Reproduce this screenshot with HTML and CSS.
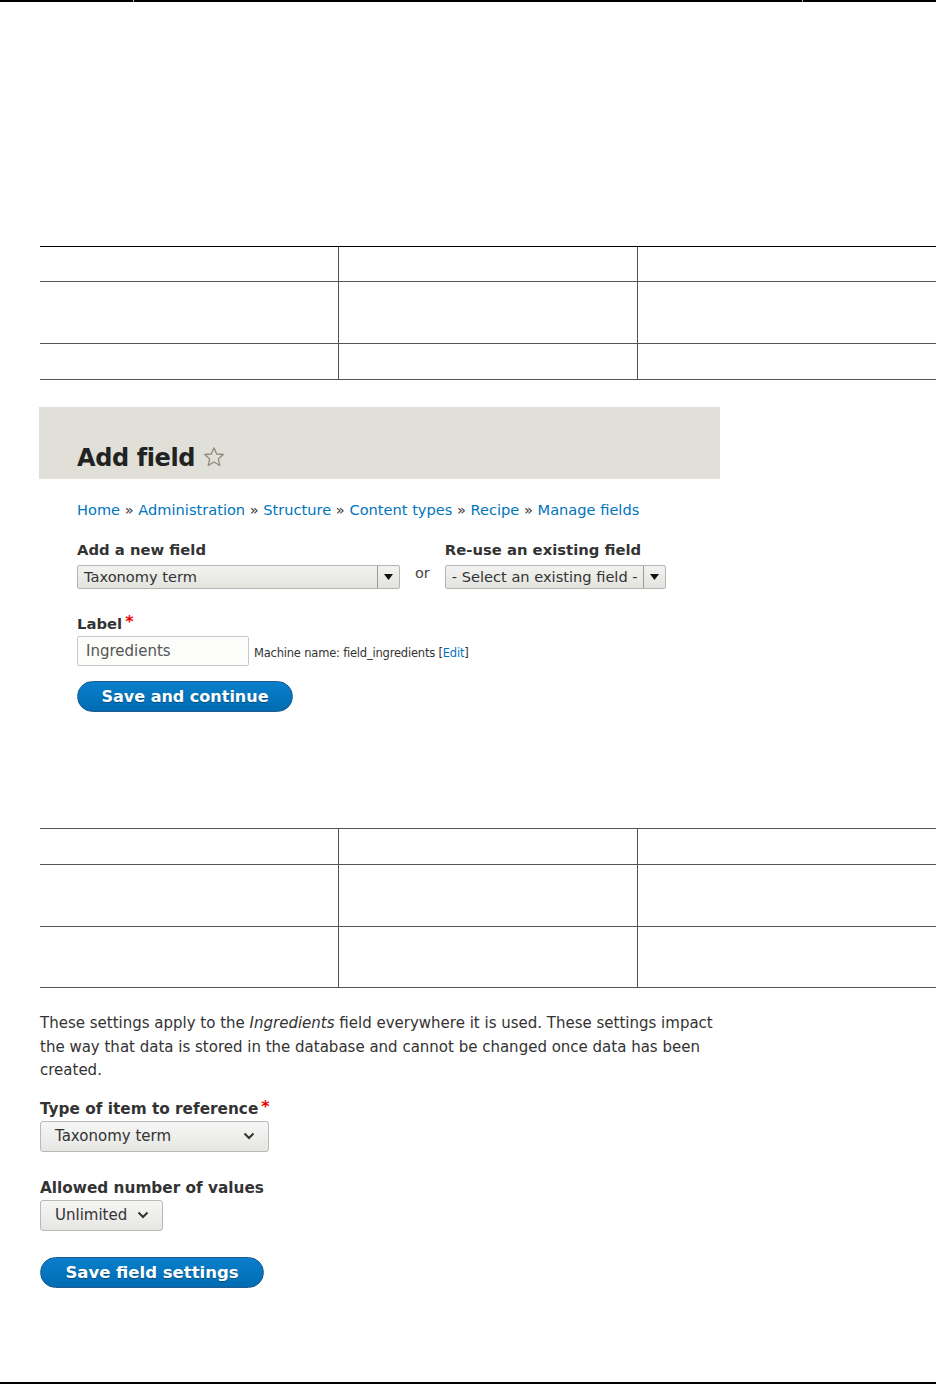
FILE: index.html
```html
<!DOCTYPE html>
<html lang="en">
<head>
    <meta charset="UTF-8">
    <meta name="viewport" content="width=device-width, initial-scale=1.0">
    <title>Add field</title>
    <link rel="stylesheet" href="styles.css">
</head>
<body>
    <div class="top-rule">
        <span></span><span></span><span></span>
    </div>

    <table class="grid grid-first">
        <tr class="row-head"><td></td><td></td><td></td></tr>
        <tr class="row-tall"><td></td><td></td><td></td></tr>
        <tr class="row-short"><td></td><td></td><td></td></tr>
    </table>

    <div class="shot">
        <div class="page-head">
            <h1>Add field<svg class="star" width="22" height="22" viewBox="0 0 22 22">
                    <path d="M11 1.8 L13.7 8 L20.3 8.5 L15.3 12.9 L16.8 19.5 L11 16 L5.2 19.5 L6.7 12.9 L1.7 8.5 L8.3 8 Z" fill="none" stroke="#8d8d84" stroke-width="1.3" stroke-linejoin="round"/>
                </svg></h1>
        </div>

        <div class="shot-body">
            <div class="breadcrumb">
                <a href="#">Home</a> » <a href="#">Administration</a> » <a href="#">Structure</a> » <a href="#">Content types</a> » <a href="#">Recipe</a> » <a href="#">Manage fields</a>
            </div>

            <div class="field-pick">
                <div class="pick-col">
                    <div class="label">Add a new field</div>
                    <div class="old-select wide">
                        <span>Taxonomy term</span>
                        <span class="drop"><svg width="9" height="6" viewBox="0 0 9 6"><path d="M0 0 H9 L4.5 6 Z" fill="#111"/></svg></span>
                    </div>
                </div>
                <div class="or">or</div>
                <div class="pick-col">
                    <div class="label">Re-use an existing field</div>
                    <div class="old-select narrow">
                        <span>- Select an existing field -</span>
                        <span class="drop"><svg width="9" height="6" viewBox="0 0 9 6"><path d="M0 0 H9 L4.5 6 Z" fill="#111"/></svg></span>
                    </div>
                </div>
            </div>

            <div class="label label-gap">Label<span class="req">*</span></div>
            <div class="label-row">
                <div class="text-input">Ingredients</div>
                <div class="machine">Machine name: field_ingredients [<a href="#">Edit</a>]</div>
            </div>

            <button type="button" class="btn btn-continue">Save and continue</button>
        </div>
    </div>

    <table class="grid grid-second">
        <tr class="row-short"><td></td><td></td><td></td></tr>
        <tr class="row-tall"><td></td><td></td><td></td></tr>
        <tr class="row-end"><td></td><td></td><td></td></tr>
    </table>

    <div class="settings">
        <p>These settings apply to the <em>Ingredients</em> field everywhere it is used. These settings impact the way that data is stored in the database and cannot be changed once data has been created.</p>

        <div class="label">Type of item to reference<span class="req">*</span></div>
        <div class="new-select type-select">
            <span>Taxonomy term</span>
            <svg width="12" height="8" viewBox="0 0 12 8"><path d="M1.5 1.5 L6 6 L10.5 1.5" fill="none" stroke="#333" stroke-width="2"/></svg>
        </div>

        <div class="label label-gap2">Allowed number of values</div>
        <div class="new-select count-select">
            <span>Unlimited</span>
            <svg width="12" height="8" viewBox="0 0 12 8"><path d="M1.5 1.5 L6 6 L10.5 1.5" fill="none" stroke="#333" stroke-width="2"/></svg>
        </div>

        <button type="button" class="btn btn-settings">Save field settings</button>
    </div>

    <div class="bottom-rule"></div>
</body>
</html>
```

FILE: styles.css
```css
html, body {
    overflow: hidden;
}
body {
    margin: 0;
    padding: 0;
    background: #fff;
    color: #333;
    font-family: "DejaVu Sans", Verdana, sans-serif;
    font-size: 15px;
}
a {
    color: #0074bd;
    text-decoration: none;
}
.top-rule {
    display: flex;
    gap: 1px;
    height: 2px;
    background: #b5b5b5;
}
.top-rule span {
    background: #000;
}
.top-rule span:nth-child(1) {
    width: 133px;
}
.top-rule span:nth-child(2) {
    width: 668px;
}
.top-rule span:nth-child(3) {
    flex: 1;
}
.grid {
    border-collapse: collapse;
    table-layout: fixed;
    width: 897px;
    margin-left: 40px;
}
.grid td {
    padding: 0;
    border-top: 1px solid #555;
    border-bottom: 1px solid #555;
}
.grid td + td {
    border-left: 1px solid #555;
}
.grid td:first-child {
    width: 298px;
}
.grid-first {
    margin-top: 244px;
}
.grid-first tr:first-child td {
    border-top-color: #000;
}
.grid-second {
    margin-top: 116px;
}
.grid .row-head td {
    height: 34px;
}
.grid .row-short td {
    height: 35px;
}
.grid .row-tall td {
    height: 61px;
}
.grid .row-end td {
    height: 60px;
}
.shot {
    width: 681px;
    margin: 27px 0 0 39px;
}
.page-head {
    height: 72px;
    background: #e0dfd8;
    padding-left: 38px;
    box-sizing: border-box;
}
.page-head h1 {
    margin: 0;
    padding-top: 36px;
    font-size: 24px;
    line-height: 30px;
    font-weight: bold;
    color: #222;
    letter-spacing: -0.4px;
}
.star {
    vertical-align: -2px;
    margin-left: 8px;
}
.shot-body {
    padding: 20px 38px 0;
}
.breadcrumb {
    line-height: 22px;
    font-size: 14.6px;
}
.label {
    font-weight: bold;
    font-size: 14.8px;
    line-height: 20px;
    color: #333;
}
.req {
    color: #e00;
    font-size: 16px;
    margin-left: 3px;
    vertical-align: 2px;
    line-height: 1;
}
.field-pick {
    display: flex;
    align-items: flex-start;
    margin-top: 19px;
}
.pick-col .label {
    margin-bottom: 5px;
}
.or {
    margin: 24px 15px 0;
    line-height: 18px;
    font-size: 14.5px;
    color: #444;
}
.old-select {
    display: flex;
    align-items: stretch;
    height: 24px;
    box-sizing: border-box;
    border: 1px solid #b4b4b4;
    border-radius: 2px;
    background: linear-gradient(#f2f2f0, #e3e3e0);
    color: #333;
    font-size: 14.6px;
}
.old-select span:first-child {
    flex: 1;
    padding-left: 6px;
    line-height: 22px;
    white-space: nowrap;
}
.old-select .drop {
    width: 21px;
    border-left: 1px solid #9a9a9a;
    display: flex;
    align-items: center;
    justify-content: center;
}
.old-select.wide {
    width: 323px;
}
.old-select.narrow {
    width: 221px;
}
.label-gap {
    margin-top: 25px;
}
.label-row {
    display: flex;
    align-items: center;
    margin-top: 2px;
}
.text-input {
    width: 172px;
    height: 30px;
    box-sizing: border-box;
    border: 1px solid #c8c8c8;
    border-radius: 2px;
    padding-left: 8px;
    line-height: 28px;
    color: #555;
    background: #fcfcfa;
}
.machine {
    margin-left: 5px;
    font-size: 11.5px;
    color: #333;
    letter-spacing: -0.2px;
    padding-top: 3px;
}
.btn {
    display: block;
    height: 31px;
    border: 1px solid #1e5b8e;
    border-radius: 16px;
    background: linear-gradient(#0a7fcc, #006cb1);
    color: #fff;
    font-family: "DejaVu Sans", Verdana, sans-serif;
    font-size: 16px;
    font-weight: bold;
    padding: 0;
    text-align: center;
    text-shadow: 0 1px 1px rgba(0, 0, 0, 0.3);
    cursor: pointer;
}
.btn-continue {
    width: 216px;
    margin-top: 15px;
}
.settings {
    width: 681px;
    margin-left: 40px;
}
.settings p {
    margin: 24px 0 0;
    line-height: 23.5px;
}
.settings .label {
    margin-top: 16px;
    font-size: 15.3px;
}
.settings .label-gap2 {
    margin-top: 26px;
}
.new-select {
    display: flex;
    align-items: center;
    justify-content: space-between;
    height: 31px;
    box-sizing: border-box;
    margin-top: 2px;
    padding: 0 13px 0 14px;
    border: 1px solid #b9b9b9;
    border-radius: 3px;
    background: linear-gradient(#f6f6f5, #e6e6e3);
    color: #333;
}
.type-select {
    width: 229px;
}
.count-select {
    width: 123px;
}
.btn-settings {
    width: 224px;
    margin-top: 26px;
    font-size: 16.5px;
}
.bottom-rule {
    height: 2px;
    background: #000;
    margin-top: 94px;
}
```
